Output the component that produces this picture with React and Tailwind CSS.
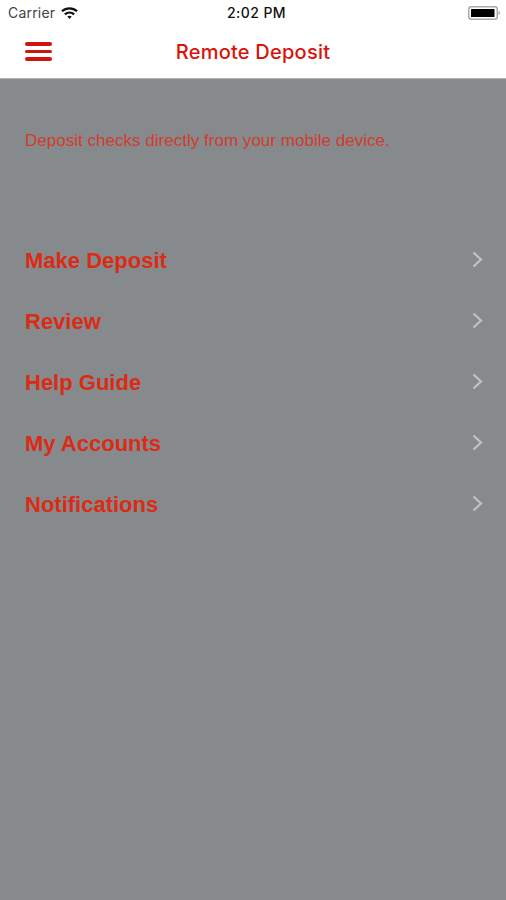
const items = ["Make Deposit", "Review", "Help Guide", "My Accounts", "Notifications"];

export default function App() {
  return (
    <div className="flex h-[900px] w-[506px] flex-col overflow-hidden bg-[#868a8d] font-['Liberation_Sans',sans-serif] text-[#dc2a14]">
      <header className="h-[79px] shrink-0 border-b border-[#b5b5b5] bg-white">
        <div className="grid h-[27px] grid-cols-3 items-center pl-2 pr-[5px] font-['Inter',sans-serif] text-[14px] text-[#111]">
          <div className="flex items-center gap-[6px]">
            <span className="-mt-[2px] tracking-[0.2px] text-[#444]">Carrier</span>
            <svg className="-mt-[2px]" width="17" height="12" viewBox="0 0 17 12" fill="none" stroke="#111" strokeWidth="2.2">
              <path d="M1 4.2C5.300.3 11.700.3 16 4.200M3.800 7.400c2.700-2.400 6.700-2.400 9.400 0" />
              <path d="M6.300 9.600c1.300-1.100 3.100-1.100 4.400 0L8.500 12z" fill="#111" stroke="none" />
            </svg>
          </div>
          <span className="-mt-[2px] pl-1 text-center font-medium tracking-[0.45px]">2:02 PM</span>
          <svg className="-mt-[2px] justify-self-end" width="33" height="14" viewBox="0 0 33 14">
            <rect x=".75" y=".75" width="28.500" height="12.500" rx="2.500" fill="none" stroke="#aaa" strokeWidth="1.500" />
            <rect x="3" y="3" width="23.500" height="8" rx=".5" fill="#000" />
            <path d="M30.500 5c2 .5 2 3.500 0 4z" fill="#aaa" />
          </svg>
        </div>
        <div className="grid h-[51px] grid-cols-3 items-center px-[25px]">
          <div className="-mt-[2px] flex w-[26.500px] flex-col gap-[3.700px]">
            <span className="h-[3.700px] rounded-full bg-[#d0150d]" />
            <span className="h-[3.700px] rounded-full bg-[#d0150d]" />
            <span className="h-[3.700px] rounded-full bg-[#d0150d]" />
          </div>
          <h1 className="-mx-2 -mt-px whitespace-nowrap text-center font-['Inter',sans-serif] text-[20px] font-medium tracking-[0.23px] text-[#d9140b]">Remote Deposit</h1>
        </div>
      </header>
      <main className="pt-[51px]">
        <p className="h-[99px] pl-[25px] text-[17px] leading-[21px] tracking-[0.020px] text-[#d43b2c]">Deposit checks directly from your mobile device.</p>
        <nav>
          {items.map((item) => (
            <a key={item} className="flex h-[61.200px] items-center justify-between pl-[25px] pr-[23px] text-[22px] font-bold">
              <span className="pt-px">{item}</span>
              <svg className="-mt-px" width="11" height="17" viewBox="0 0 11 17" fill="none" stroke="#c0c3c5" strokeWidth="2.200">
                <path d="M1.500 1.500 9 8.500l-7.500 7" />
              </svg>
            </a>
          ))}
        </nav>
      </main>
    </div>
  );
}
